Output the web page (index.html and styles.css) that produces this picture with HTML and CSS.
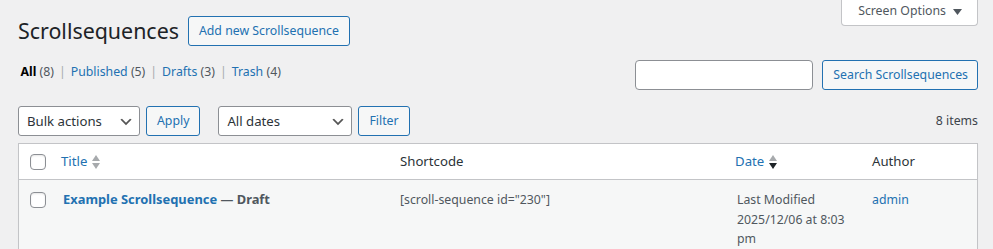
FILE: index.html
```html
<!DOCTYPE html>
<html lang="en">
<head>
<meta charset="utf-8">
<title>Scrollsequences</title>
<link rel="stylesheet" href="styles.css">
</head>
<body>
<div class="wrap">
  <div class="screen-meta">
    <button class="screen-options" type="button">Screen Options
      <svg class="tri" width="9" height="6" viewBox="0 0 9 6"><polygon points="0,0 9,0 4.5,6" fill="#50575e"/></svg>
    </button>
  </div>
  <div class="title-row">
    <h1 class="page-title">Scrollsequences</h1>
    <a class="button" href="#">Add new Scrollsequence</a>
  </div>
  <div class="filter-row">
    <ul class="subsubsub">
      <li><span class="current">All</span> <span class="count">(8)</span></li>
      <li class="sep">|</li>
      <li><a href="#">Published</a> <span class="count">(5)</span></li>
      <li class="sep">|</li>
      <li><a href="#">Drafts</a> <span class="count">(3)</span></li>
      <li class="sep">|</li>
      <li><a href="#">Trash</a> <span class="count">(4)</span></li>
    </ul>
    <div class="search-box">
      <input class="search-input" type="search" aria-label="Search Scrollsequences">
      <button class="button button-search" type="button">Search Scrollsequences</button>
    </div>
  </div>
  <div class="tablenav">
    <div class="actions bulk">
      <div class="select select-bulk"><span>Bulk actions</span>
        <svg width="16" height="16" viewBox="0 0 20 20"><path d="M5 6l5 5 5-5 2 1-7 7-7-7 2-1z" fill="#555"/></svg>
      </div>
      <button class="button" type="button">Apply</button>
    </div>
    <div class="actions">
      <div class="select select-dates"><span>All dates</span>
        <svg width="16" height="16" viewBox="0 0 20 20"><path d="M5 6l5 5 5-5 2 1-7 7-7-7 2-1z" fill="#555"/></svg>
      </div>
      <button class="button" type="button">Filter</button>
    </div>
    <div class="displaying-num">8 items</div>
  </div>
  <table class="list-table">
    <colgroup>
      <col class="c-check">
      <col class="c-title">
      <col class="c-short">
      <col class="c-date">
      <col class="c-author">
    </colgroup>
    <thead>
      <tr>
        <th class="check"><input class="cb" type="checkbox" aria-label="Select all"></th>
        <th class="sortable"><a href="#" class="sort-link">Title
          <svg class="sort" width="10" height="16" viewBox="0 0 10 16"><polygon points="1,7 5,1 9,7" fill="#a7aaad"/><polygon points="1,9 9,9 5,15" fill="#a7aaad"/></svg></a></th>
        <th>Shortcode</th>
        <th class="sortable"><a href="#" class="sort-link">Date
          <svg class="sort" width="10" height="16" viewBox="0 0 10 16"><polygon points="1,7 5,1 9,7" fill="#a7aaad"/><polygon points="1,9 9,9 5,15" fill="#1d2327"/></svg></a></th>
        <th>Author</th>
      </tr>
    </thead>
    <tbody>
      <tr class="alt">
        <td class="check"><input class="cb" type="checkbox" aria-label="Select Example Scrollsequence"></td>
        <td><strong class="title-strong"><a href="#" class="row-title">Example Scrollsequence</a> — <span class="post-state">Draft</span></strong></td>
        <td>[scroll-sequence id="230"]</td>
        <td>Last Modified<br>2025/12/06 at 8:03 pm</td>
        <td><a href="#">admin</a></td>
      </tr>
    </tbody>
  </table>
</div>
</body>
</html>
```
FILE: styles.css
```css
* {
  box-sizing: border-box;
}

html,
body {
  margin: 0;
}

body {
  background: #f0f0f1;
  color: #3c434a;
  font-family: "Noto Sans", "Open Sans", sans-serif;
  font-size: 12.3px;
  line-height: 1.4;
}

a {
  color: #2271b1;
  text-decoration: none;
}

.wrap {
  padding: 0 15px 0 18px;
}

/* Screen options tab */
.screen-meta {
  float: right;
}

.screen-options {
  display: flex;
  align-items: center;
  gap: 7px;
  height: 26px;
  padding: 1px 15px 4px 16px;
  background: #fff;
  border: 1px solid #c3c4c7;
  border-top: 0;
  border-radius: 0 0 4px 4px;
  color: #50575e;
  font: inherit;
  line-height: 20px;
}

.tri {
  display: block;
  margin-top: 1px;
}

/* Title */
.title-row {
  display: flex;
  align-items: flex-start;
  gap: 9px;
  padding-top: 16px;
}

.page-title {
  margin: 0;
  font-size: 21.4px;
  font-weight: 400;
  line-height: 30px;
  color: #1d2327;
}

.button {
  display: inline-flex;
  align-items: center;
  height: 30px;
  padding: 0 10px;
  border: 1px solid #2271b1;
  border-radius: 3px;
  background: #f6f7f7;
  color: #2271b1;
  font-family: inherit;
  font-size: 12.3px;
  line-height: 28px;
  white-space: nowrap;
}

.button-search {
  padding: 0 9px 0 10px;
}

/* Status links + search */
.filter-row {
  display: flex;
  justify-content: space-between;
  align-items: flex-start;
  margin-top: 14px;
}

.subsubsub {
  display: flex;
  gap: 5px;
  list-style: none;
  margin: 0;
  padding: 1px 0 0 2.5px;
  line-height: 21px;
  color: #50575e;
}

.subsubsub .current {
  color: #000;
  font-weight: 700;
}

.subsubsub .count {
  color: #50575e;
}

.subsubsub .sep {
  color: #a7aaad;
}

.search-box {
  display: flex;
  gap: 9px;
}

.search-input {
  width: 178px;
  height: 30px;
  margin: 0;
  border: 1px solid #8c8f94;
  border-radius: 4px;
  background: #fff;
}

/* Table nav */
.tablenav {
  display: flex;
  align-items: flex-start;
  margin-top: 16px;
  height: 30px;
}

.actions {
  display: flex;
  gap: 6px;
}

.actions.bulk {
  margin-right: 18px;
}

.select {
  display: flex;
  align-items: center;
  justify-content: space-between;
  height: 30px;
  padding: 0 5px 0 8px;
  border: 1px solid #8c8f94;
  border-radius: 3px;
  background: #fff;
  color: #2c3338;
  font-size: 13.2px;
  line-height: 28px;
}

.select svg {
  display: block;
  margin-top: 2px;
}

.select-bulk {
  width: 122px;
}

.select-dates {
  width: 134px;
}

.displaying-num {
  margin-left: auto;
  margin-top: 1px;
  line-height: 28px;
  color: #3c434a;
}

/* List table */
.list-table {
  width: 100%;
  margin-top: 7px;
  border-spacing: 0;
  border: 1px solid #c3c4c7;
  background: #fff;
  table-layout: fixed;
  box-shadow: 0 1px 1px rgba(0, 0, 0, 0.04);
}

.c-check {
  width: 34px;
}

.c-title {
  width: 337px;
}

.c-short {
  width: 337px;
}

.c-date {
  width: 135px;
}

.list-table th {
  padding: 8px 10px;
  border-bottom: 1px solid #c3c4c7;
  color: #2c3338;
  font-size: 13.2px;
  font-weight: 400;
  line-height: 19px;
  text-align: left;
  vertical-align: top;
}

.list-table th.sortable {
  padding: 8px;
}

.sort-link {
  display: inline-flex;
  align-items: center;
  gap: 4px;
}

.sort {
  display: block;
}

.list-table th.check {
  padding: 10px 0 0 11px;
}

.list-table td {
  padding: 10px 10px 8px;
  color: #50575e;
  font-size: 12.3px;
  line-height: 19.5px;
  vertical-align: top;
}

.list-table td.check {
  padding: 12px 0 0 11px;
}

.list-table tr.alt td {
  background: #f6f7f7;
}

.cb {
  appearance: none;
  display: block;
  width: 16px;
  height: 16px;
  margin: 0;
  border: 1px solid #8c8f94;
  border-radius: 4px;
  background: #fff;
  box-shadow: inset 0 1px 2px rgba(0, 0, 0, 0.1);
}

.title-strong {
  font-size: 12.9px;
  font-weight: 700;
  color: #50575e;
}
```
